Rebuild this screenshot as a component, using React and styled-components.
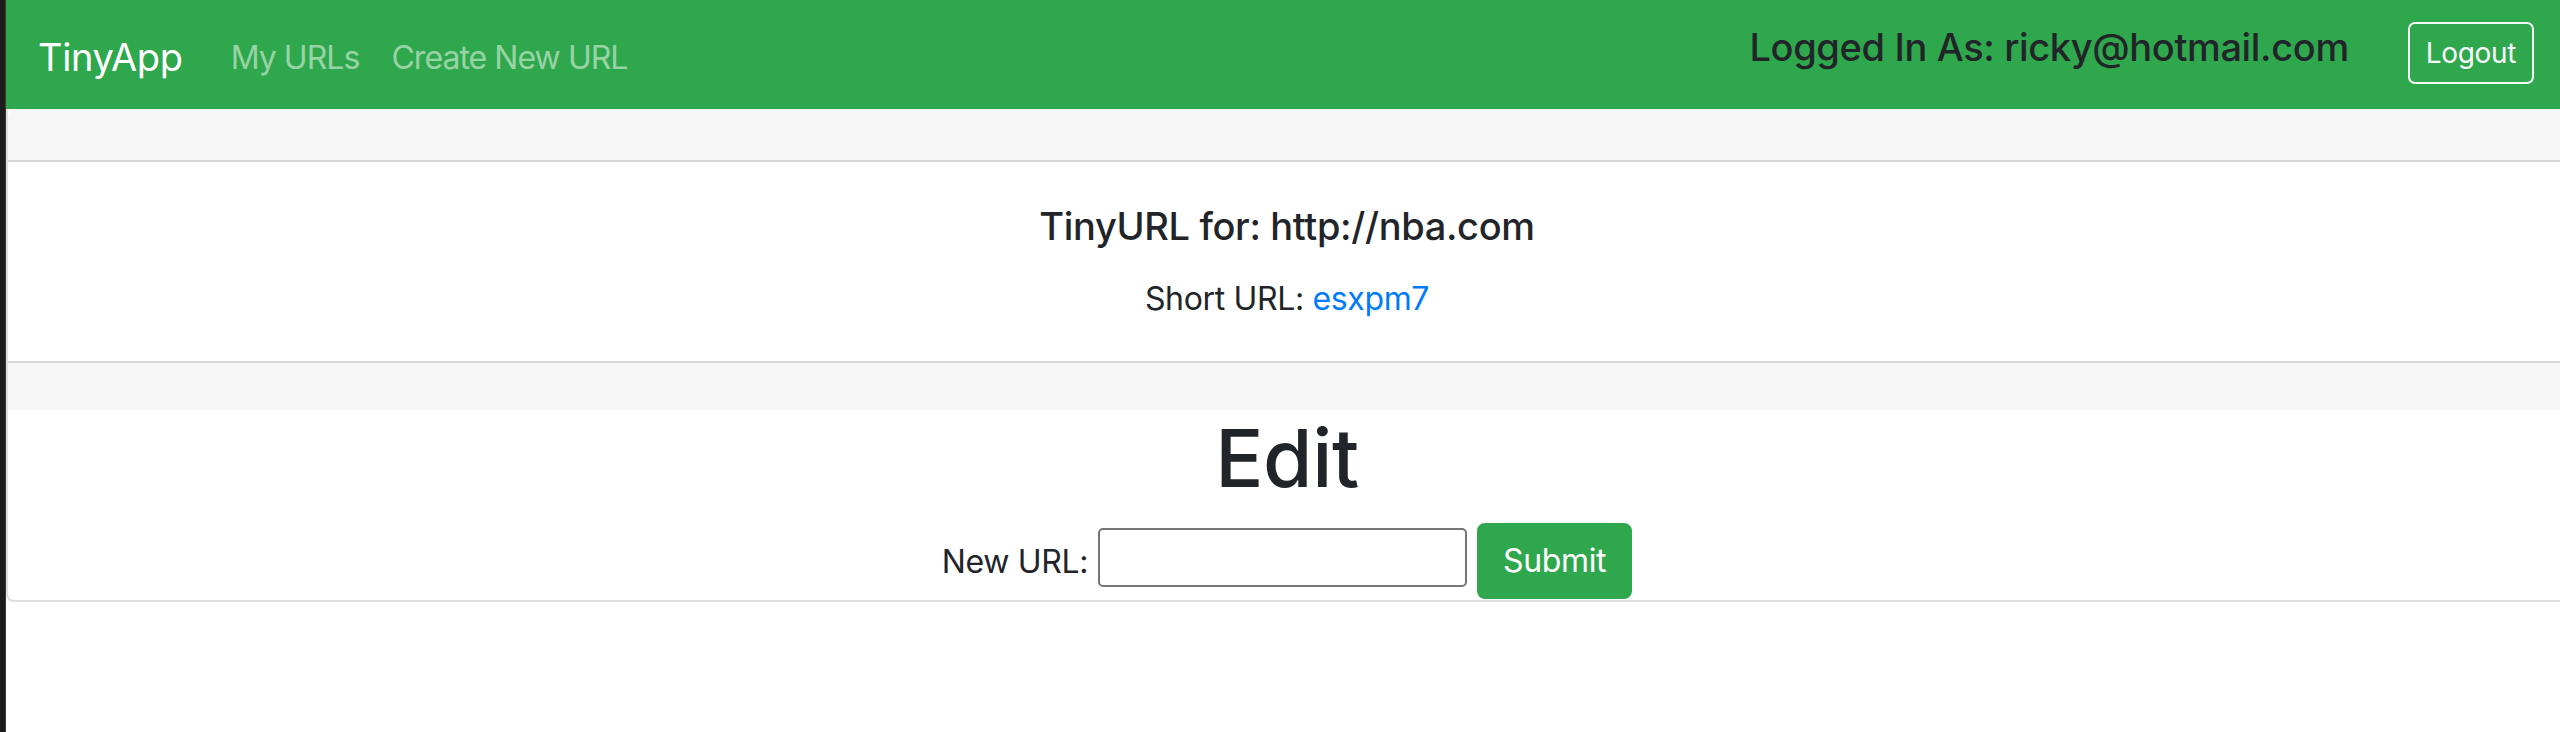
import React from "react"
import styled, { createGlobalStyle } from "styled-components"

const GlobalStyle = createGlobalStyle`
  html, body {
    margin: 0;
    padding: 0;
    background: #ffffff;
  }
  body {
    font-family: Inter, "Noto Sans", "Liberation Sans", sans-serif;
    color: #212529;
    letter-spacing: -0.022em;
    overflow: hidden;
  }
  * { box-sizing: border-box; }
`

const GREEN = "#2fa74c"

const App = () => (
  <Frame>
    <GlobalStyle />
    <Stripe />
    <Main>
      <Navbar>
        <Brand href="#">TinyApp</Brand>
        <NavLinks>
          <NavLink href="#">My URLs</NavLink>
          <NavLink href="#">Create New URL</NavLink>
        </NavLinks>
        <NavRight>
          <LoggedIn>Logged In As: ricky@hotmail.com</LoggedIn>
          <OutlineButton type="button">Logout</OutlineButton>
        </NavRight>
      </Navbar>

      <Card>
        <CardHeader />
        <CardBody>
          <CardTitle>TinyURL for: http://nba.com</CardTitle>
          <CardText>
            Short URL: <BlueLink href="#">esxpm7</BlueLink>
          </CardText>
        </CardBody>
        <CardFooter />
        <EditSection>
          <EditTitle>Edit</EditTitle>
          <Form onSubmit={e => e.preventDefault()}>
            <Label htmlFor="longURL">New URL:</Label>
            <TextInput id="longURL" type="text" />
            <SubmitButton type="submit">Submit</SubmitButton>
          </Form>
        </EditSection>
      </Card>
    </Main>
  </Frame>
)

export default App

const Frame = styled.div`
  display: flex;
  width: 100vw;
  height: 732px;
  overflow: hidden;
`

const Stripe = styled.div`
  flex: 0 0 6px;
  background: #1c1c1c;
  border-right: 1px solid #3a3a3a;
`

const Main = styled.div`
  flex: 1 1 auto;
  min-width: 0;
  overflow: hidden;
  display: flex;
  flex-direction: column;
`

const Navbar = styled.nav`
  flex: 0 0 109px;
  width: 2560px;
  background-color: ${GREEN};
  display: flex;
  align-items: center;
  padding: 0 32px;
`

const Brand = styled.a`
  font-size: 38px;
  color: #ffffff;
  text-decoration: none;
  margin-right: 32px;
  line-height: 1.5;
  margin-top: 6px;
`

const NavLinks = styled.div`
  display: flex;
  margin-top: 6px;
`

const NavLink = styled.a`
  font-size: 32px;
  letter-spacing: -0.03em;
  padding: 16px;
  color: rgba(255, 255, 255, 0.5);
  text-decoration: none;
`

const NavRight = styled.div`
  margin-left: auto;
  display: flex;
  align-items: center;
  gap: 59px;
`

const LoggedIn = styled.h5`
  margin: 0 0 14px;
  font-size: 38px;
  font-weight: 500;
  line-height: 1.2;
  color: #212529;
`

const OutlineButton = styled.button`
  font-family: inherit;
  letter-spacing: inherit;
  font-size: 28px;
  line-height: 1.5;
  padding: 8px 16px;
  color: #f8f9fa;
  background: transparent;
  border: 2px solid #f8f9fa;
  border-radius: 7px;
  margin-top: -4px;
`

const Card = styled.div`
  width: 2560px;
  display: flex;
  flex-direction: column;
  background: #ffffff;
  border: 2px solid #dfdfdf;
  border-top-width: 0;
  border-right: none;
  border-radius: 0 0 8px 8px;
`

const CardHeader = styled.div`
  height: 53px;
  background: #f7f7f7;
  border-bottom: 2px solid #d9d9d9;
  border-top-left-radius: 8px;
`

const CardBody = styled.div`
  padding: 40px 40px 38px;
  display: flex;
  flex-direction: column;
  align-items: center;
  gap: 25px;
`

const CardTitle = styled.h5`
  margin: 0;
  font-size: 38px;
  font-weight: 500;
  line-height: 48px;
  color: #212529;
`

const CardText = styled.p`
  margin: 0;
  font-size: 32px;
  line-height: 48px;
`

const BlueLink = styled.a`
  color: #007bff;
  text-decoration: none;
`

const CardFooter = styled.div`
  height: 49px;
  background: #f7f7f7;
  border-top: 2px solid #d9d9d9;
`

const EditSection = styled.div`
  display: flex;
  flex-direction: column;
  align-items: center;
`

const EditTitle = styled.h1`
  margin: 0 0 16px;
  font-size: 80px;
  font-weight: 500;
  line-height: 96px;
  color: #212529;
`

const Form = styled.form`
  display: flex;
  align-items: center;
  gap: 10px;
  height: 78px;
`

const Label = styled.label`
  font-size: 32px;
  color: #212529;
`

const TextInput = styled.input`
  width: 369px;
  height: 59px;
  border: 2px solid #767676;
  border-radius: 5px;
  font-size: 27px;
  padding: 2px 4px;
  margin-top: -8px;
  outline: none;
`

const SubmitButton = styled.button`
  font-family: inherit;
  letter-spacing: inherit;
  font-size: 32px;
  line-height: 48px;
  padding: 12px 24px;
  color: #ffffff;
  background: ${GREEN};
  border: 2px solid ${GREEN};
  border-radius: 8px;
`
